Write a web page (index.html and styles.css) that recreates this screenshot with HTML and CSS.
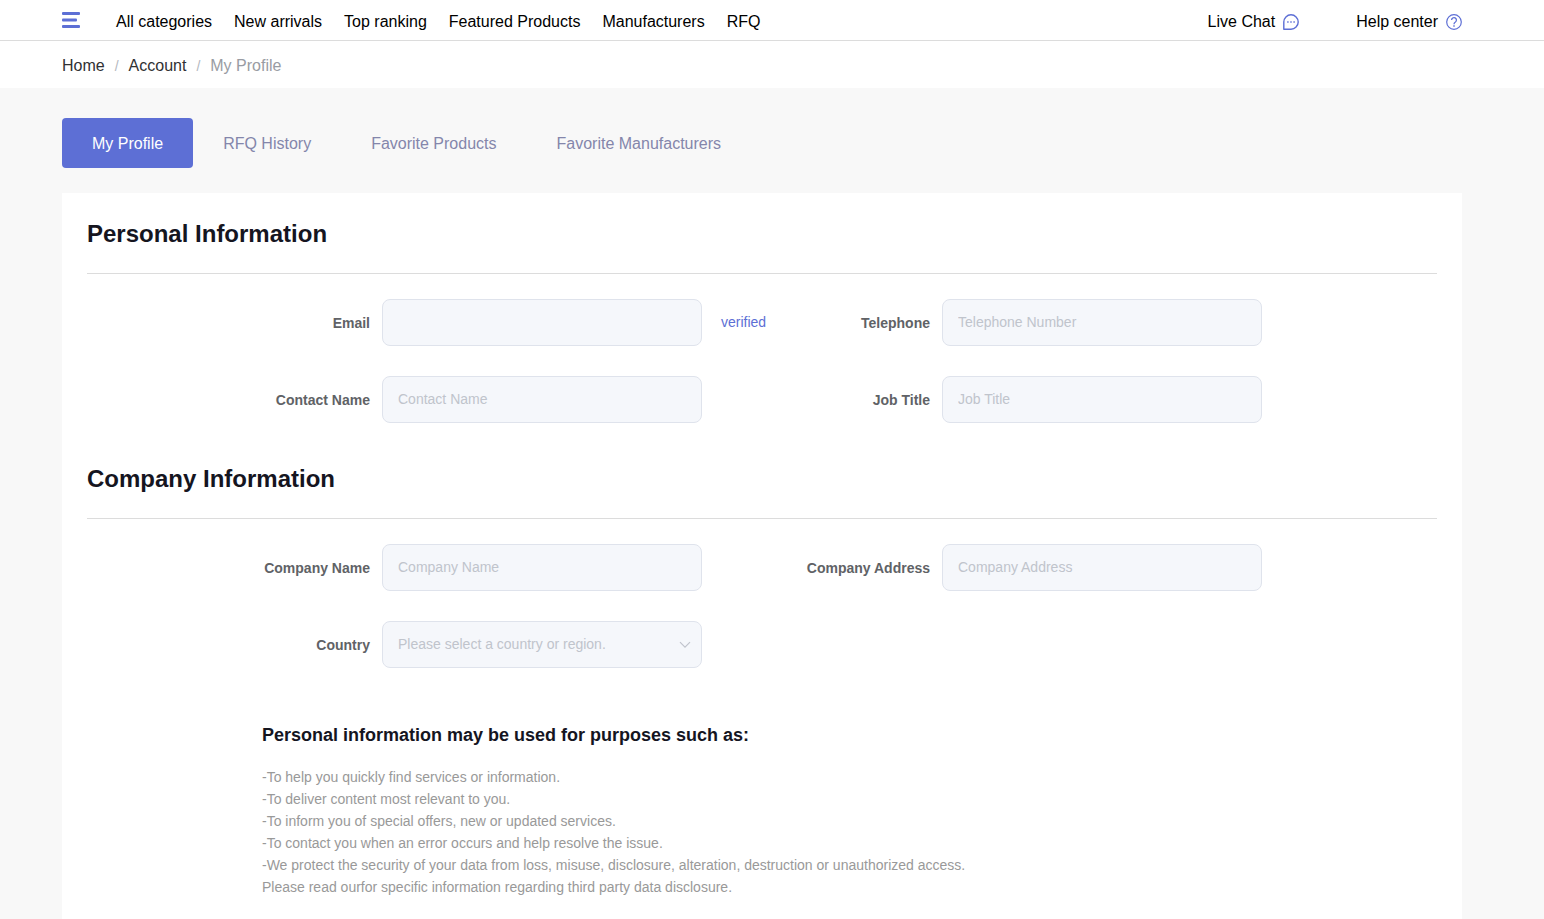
FILE: index.html
```html
<!DOCTYPE html>
<html lang="en">
<head>
<meta charset="utf-8">
<meta name="viewport" content="width=device-width, initial-scale=1">
<title>My Profile</title>
<link rel="stylesheet" href="styles.css">
</head>
<body>
<header class="topbar wrap">
  <button class="menu-button" type="button" aria-label="Menu">
    <svg width="18" height="16" viewBox="0 0 18 16" fill="#5d6fd5" aria-hidden="true"><rect width="18" height="3" rx="1"/><rect y="6.5" width="15" height="3" rx="1"/><rect y="13" width="18" height="3" rx="1"/></svg>
  </button>
  <nav class="main-nav" aria-label="Main">
    <a href="#">All categories</a>
    <a href="#">New arrivals</a>
    <a href="#">Top ranking</a>
    <a href="#">Featured Products</a>
    <a href="#">Manufacturers</a>
    <a href="#">RFQ</a>
  </nav>
  <div class="support">
    <a href="#">Live Chat
      <svg width="16" height="16" viewBox="0 0 16 16" fill="none" stroke="#5d6fd5" stroke-width="1.4" aria-hidden="true"><path d="M.8 15.2V8A7.2 7.2 0 1 1 8 15.2Z" stroke-linejoin="round"/><path d="M4.2 8h1.4M7.3 8h1.4M10.4 8h1.4" stroke-width="1.4"/></svg>
    </a>
    <a href="#">Help center
      <svg width="16" height="16" viewBox="0 0 16 16" fill="none" stroke="#5d6fd5" stroke-width="1.2" aria-hidden="true"><circle cx="8" cy="8" r="7.3"/><path d="M5.6 6.1a2.4 2.4 0 1 1 3.8 1.9C8.4 8.6 8 9 8 10.2" stroke-width="1.3"/><path d="M8 11.2v1.5" stroke-width="1.4"/></svg>
    </a>
  </div>
</header>
<nav class="breadcrumb wrap" aria-label="Breadcrumb">
  <a href="#">Home</a><span class="separator">/</span><a href="#">Account</a><span class="separator">/</span><span class="current" aria-current="page">My Profile</span>
</nav>
<main class="content wrap">
  <nav class="tabs" aria-label="Account sections">
    <a class="tab active" href="#">My Profile</a>
    <a class="tab" href="#">RFQ History</a>
    <a class="tab" href="#">Favorite Products</a>
    <a class="tab" href="#">Favorite Manufacturers</a>
  </nav>
  <form class="panel">
    <section class="section">
      <h2 class="section-title">Personal Information</h2>
      <div class="fields">
        <div class="field"><label for="email">Email</label><input id="email" type="email"><span class="verified">verified</span></div>
        <div class="field"><label for="telephone">Telephone</label><input id="telephone" type="tel" placeholder="Telephone Number"></div>
        <div class="field"><label for="contact">Contact Name</label><input id="contact" type="text" placeholder="Contact Name"></div>
        <div class="field"><label for="job">Job Title</label><input id="job" type="text" placeholder="Job Title"></div>
      </div>
    </section>
    <section class="section">
      <h2 class="section-title">Company Information</h2>
      <div class="fields">
        <div class="field"><label for="company">Company Name</label><input id="company" type="text" placeholder="Company Name"></div>
        <div class="field"><label for="address">Company Address</label><input id="address" type="text" placeholder="Company Address"></div>
        <div class="field"><label for="country">Country</label>
          <div class="select-box">
            <select id="country"><option>Please select a country or region.</option></select>
            <svg width="12" height="8" viewBox="0 0 12 8" fill="none" stroke="#c0c4cc" stroke-width="1.2" aria-hidden="true"><path d="M1 1.2l5 5 5-5"/></svg>
          </div>
        </div>
      </div>
    </section>
    <section class="notice">
      <h3>Personal information may be used for purposes such as:</h3>
      <p>-To help you quickly find services or information.</p>
      <p>-To deliver content most relevant to you.</p>
      <p>-To inform you of special offers, new or updated services.</p>
      <p>-To contact you when an error occurs and help resolve the issue.</p>
      <p>-We protect the security of your data from loss, misuse, disclosure, alteration, destruction or unauthorized access.</p>
      <p>Please read ourfor specific information regarding third party data disclosure.</p>
    </section>
  </form>
</main>
</body>
</html>
```
FILE: styles.css
```css
* { box-sizing: border-box; }
body {
  margin: 0;
  min-height: 100vh;
  display: flex;
  flex-direction: column;
  background: #f8f8f8;
  color: #15151f;
  font-family: "Liberation Sans", Arial, sans-serif;
  font-size: 16px;
}
a { color: inherit; text-decoration: none; }
h2, h3, p { margin: 0; }
svg { display: block; flex: none; }
.wrap { padding-left: 62px; padding-right: 82px; }

.topbar {
  display: flex;
  align-items: center;
  min-height: 41px;
  background: #fff;
  border-bottom: 1px solid #dcdcdc;
  color: #000;
  line-height: 22px;
  white-space: nowrap;
}
.menu-button { margin: 0 36px 0 0; padding: 0; border: 0; background: none; cursor: pointer; }
.main-nav { display: flex; gap: 22px; padding-top: 3px; }
.support { display: flex; gap: 57px; margin-left: auto; padding-top: 3px; }
.support a { display: flex; align-items: center; gap: 8px; }

.breadcrumb {
  display: flex;
  align-items: center;
  min-height: 47px;
  padding-top: 2px;
  background: #fff;
  color: #303133;
}
.separator { margin: 0 10px; color: #b4b8c0; font-size: 14px; }
.current { color: #999ca3; }

.content { flex: 1; display: flex; flex-direction: column; padding-top: 30px; }
.tabs { display: flex; margin-bottom: 25px; }
.tab { padding: 2px 30px 0; border-radius: 4px; color: #8486ab; line-height: 48px; }
.tab.active { background: #5d6fd5; color: #fff; }

.panel { flex: 1; padding: 25px 25px 16px; background: #fff; }
.section { margin-bottom: 40px; }
.section-title {
  padding-bottom: 23px;
  border-bottom: 1px solid #dcdcdc;
  font-size: 24px;
  line-height: 32px;
}
.fields {
  display: grid;
  grid-template-columns: repeat(2, minmax(0, 1fr));
  row-gap: 30px;
  padding: 25px 95px 0 135px;
}
.field {
  display: grid;
  grid-template-columns: 148px minmax(0, 320px) auto;
  column-gap: 12px;
  justify-content: start;
  align-items: center;
  font-size: 14px;
}
.field label { color: #606266; font-weight: bold; text-align: right; }
.field input, .field select {
  width: 100%;
  height: 47px;
  padding: 0 15px 2px;
  border: 1px solid #dfe3ec;
  border-radius: 8px;
  background: #f5f7fb;
  color: #606266;
  font: inherit;
}
.field input::placeholder { color: #c0c4cc; opacity: 1; }
.field select { appearance: none; color: #c0c4cc; }
.select-box { display: grid; align-items: center; }
.select-box > * { grid-area: 1 / 1; }
.select-box svg { justify-self: end; margin-right: 11px; pointer-events: none; }
.verified { padding: 0 0 2px 7px; color: #5d6fd5; }

.notice { margin-top: 56px; padding-left: 175px; color: #999; font-size: 14px; line-height: 22px; }
.notice h3 { margin-bottom: 20px; color: #15151f; font-size: 18px; line-height: 22px; }
```
